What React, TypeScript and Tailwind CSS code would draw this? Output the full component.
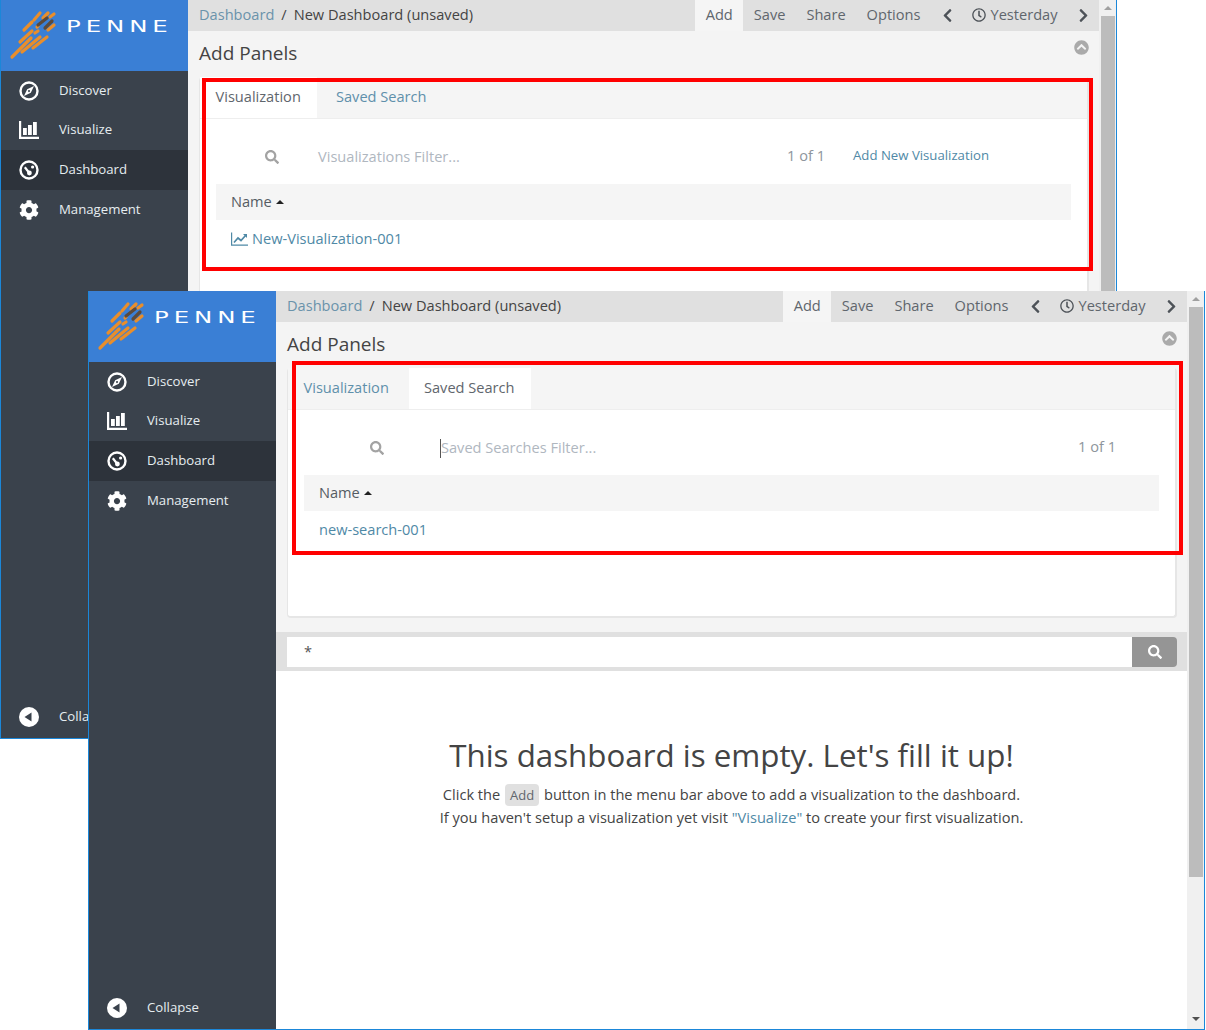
import React from "react";
import { FaCog, FaSearch, FaChevronCircleUp, FaRegClock, FaChevronLeft, FaChevronRight } from "react-icons/fa";

function Logo() {
  const orange: number[][] = [
    [12, 57, 31, 38], [22, 52, 40, 37], [33, 48, 47, 37], [20, 42, 32, 31], [24, 30, 32, 22],
    [35, 33, 38, 31], [48, 30, 54, 25], [34, 20, 40, 13], [43, 18, 48, 13], [50, 17, 54, 14], [37, 27, 38, 26],
  ];
  const dark: number[][] = [[38, 25, 47, 18], [45, 28, 52, 21]];
  return (
    <svg width="50" height="54" viewBox="8 8 50 54" className="shrink-0">
      {orange.map((l, i) => (
        <line key={i} x1={l[0]} y1={l[1]} x2={l[2]} y2={l[3]} stroke="#e98e2b" strokeWidth="3.2" strokeLinecap="round" />
      ))}
      {dark.map((l, i) => (
        <line key={i} x1={l[0]} y1={l[1]} x2={l[2]} y2={l[3]} stroke="#5b4a3c" strokeWidth="3.2" strokeLinecap="round" />
      ))}
    </svg>
  );
}

function CompassIcon() {
  return (
    <svg width="20" height="20" viewBox="0 0 20 20">
      <circle cx="10" cy="10" r="8.5" fill="none" stroke="#fff" strokeWidth="2.4" />
      <path d="M15 5 L11.8 11.8 L5 15 L8.2 8.2 Z M10 9 a1 1 0 1 0 .01 0" fill="#fff" fillRule="evenodd" />
    </svg>
  );
}
function BarsIcon() {
  return (
    <svg width="20" height="20" viewBox="0 0 20 20" fill="#fff">
      <path d="M0 1h2.2v15.8H20V19H0z" />
      <rect x="4" y="8" width="3.8" height="7" />
      <rect x="9" y="5" width="3.8" height="10" />
      <rect x="14" y="2" width="3.8" height="13" />
    </svg>
  );
}
function DialIcon() {
  return (
    <svg width="20" height="20" viewBox="0 0 20 20">
      <circle cx="10" cy="10" r="8.5" fill="none" stroke="#fff" strokeWidth="2.4" />
      <path d="M5.8 7.2 L10 12.5" stroke="#fff" strokeWidth="2.2" />
      <circle cx="10.4" cy="13" r="2.4" fill="#fff" />
      <circle cx="13.6" cy="7" r="1.6" fill="#fff" />
    </svg>
  );
}
function CollapseIcon() {
  return (
    <svg width="20" height="20" viewBox="0 0 20 20">
      <circle cx="10" cy="10" r="10" fill="#fff" />
      <path d="M5.5 10 L12.5 5.5 V14.5 Z" fill="#3a424c" />
    </svg>
  );
}
function LineChartIcon() {
  return (
    <svg width="17" height="14" viewBox="0 0 17 14" fill="none" stroke="currentColor" className="shrink-0">
      <path d="M0.6 0.5 V13.2 H17" strokeWidth="1.2" />
      <path d="M3 10.5 L7 6 L10 8.5 L15 3" strokeWidth="1.7" />
      <path d="M12 2 H16 V6 Z" fill="currentColor" stroke="none" />
    </svg>
  );
}

function NavItem({ icon, label, active }: { icon: React.ReactNode; label: string; active?: boolean }) {
  return (
    <div className={`flex h-[39.6px] items-center ${active ? "bg-[#2d333b]" : ""}`}>
      <span className="mr-[2px] flex w-[56px] justify-center text-white">{icon}</span>
      <span className="text-[13.2px] text-[#e6edf0]">{label}</span>
    </div>
  );
}

function Sidebar() {
  return (
    <aside className="flex w-[187px] shrink-0 flex-col bg-[#3a424c]">
      <div className="flex h-[71px] items-start gap-[8px] bg-[#3a7fd5] pl-[7px] pt-[8px]">
        <Logo />
        <span className="mt-[7px] origin-left scale-x-[1.63] font-['DejaVu_Sans'] text-[15px] font-normal leading-[24px] tracking-[3px] text-white">PENNE</span>
      </div>
      <NavItem icon={<CompassIcon />} label="Discover" />
      <NavItem icon={<BarsIcon />} label="Visualize" />
      <NavItem icon={<DialIcon />} label="Dashboard" active />
      <NavItem icon={<FaCog size={20} />} label="Management" />
      <div className="mt-auto mb-[1px]">
        <NavItem icon={<CollapseIcon />} label="Collapse" />
      </div>
    </aside>
  );
}

function TopBar() {
  const item = "px-[10.5px] pb-[2px] leading-[29px] text-[#5f666d]";
  return (
    <div className="flex h-[31px] shrink-0 items-center bg-[#e0e0e0] text-[14.6px]">
      <div className="flex flex-1 items-center pb-[2px] pl-[11px] leading-[29px]">
        <span className="text-[#6b93ab]">Dashboard</span>
        <span className="mx-[7px] text-[#444]">/</span>
        <span className="text-[#444]">New Dashboard (unsaved)</span>
      </div>
      <span className="bg-[#f5f5f5] px-[10.5px] pb-[2px] leading-[29px] text-[#5f666d]">Add</span>
      <span className={item}>Save</span>
      <span className={item}>Share</span>
      <span className={item}>Options</span>
      <span className="flex w-[41.5px] justify-start pl-[9px] text-[#4d5258]"><FaChevronLeft size={15} /></span>
      <span className="flex items-center gap-[4px] pb-[2px] leading-[29px] text-[#5f666d]"><FaRegClock size={14} className="text-[#4d5258]" />Yesterday</span>
      <span className="flex w-[41.5px] justify-start pl-[18px] text-[#4d5258]"><FaChevronRight size={15} /></span>
    </div>
  );
}

function PanelTabs({ tab }: { tab: "viz" | "search" }) {
  const on = "flex h-full items-center bg-white text-[#5f666d]";
  const off = "flex h-full items-center text-[#5f90ab]";
  return (
    <div className="flex h-[42px] items-stretch gap-[4px] border-b border-[#eeeeee] bg-[#f5f5f5] text-[14.6px]">
      <div className={`w-[117px] pl-[15.5px] pb-[2px] ${tab === "viz" ? on : off}`}>Visualization</div>
      <div className={`w-[122px] pl-[15px] pb-[2px] ${tab === "search" ? on : off}`}>Saved Search</div>
    </div>
  );
}

function Toolbar({ tab }: { tab: "viz" | "search" }) {
  if (tab === "viz") {
    return (
      <div className="flex h-[65px] items-center pt-[11px] text-[14.6px]">
        <FaSearch size={14} className="ml-[49px] text-[#a3a3a3]" />
        <span className="ml-[39px] flex-1 text-[#b0b7bf]">Visualizations Filter...</span>
        <span className="-mt-[2px] text-[#8e959c]">1 of 1</span>
        <span className="-mt-[2px] ml-[28px] mr-[82px] text-[13.2px] text-[#4f89a6]">Add New Visualization</span>
      </div>
    );
  }
  return (
    <div className="flex h-[65px] items-center pt-[11px] text-[14.6px]">
      <FaSearch size={14} className="ml-[66px] text-[#a3a3a3]" />
      <span className="ml-[56px] h-[19px] w-px bg-[#555]" />
      <span className="flex-1 text-[#b0b7bf]">Saved Searches Filter...</span>
      <span className="-mt-[2px] mr-[43px] text-[#8e959c]">1 of 1</span>
    </div>
  );
}

function Panel({ tab }: { tab: "viz" | "search" }) {
  return (
    <div className="ml-[11px] mr-[10px] h-[250px] rounded-[4px] border-2 border-l border-t-0 border-[#e6e6e6] bg-white">
      <PanelTabs tab={tab} />
      <div className="px-[16px]">
        <Toolbar tab={tab} />
        <div className="flex h-[36px] items-center gap-[4px] bg-[#f5f5f5] pl-[15px] text-[14.6px] text-[#555c63]">
          Name
          <span className="h-0 w-0 border-x-[4.5px] border-b-[4.5px] border-x-transparent border-b-[#222]" />
        </div>
        <div className="flex h-[37px] items-center gap-[4px] pl-[15px] text-[14.6px] text-[#4f89a6]">
          {tab === "viz" ? (
            <>
              <LineChartIcon />
              New-Visualization-001
            </>
          ) : (
            "new-search-001"
          )}
        </div>
      </div>
    </div>
  );
}

function Main({ tab }: { tab: "viz" | "search" }) {
  return (
    <main className="flex min-w-0 flex-1 flex-col bg-white">
      <TopBar />
      <div className="h-[310px] shrink-0 bg-[#f4f4f4]">
        <div className="flex h-[46px] items-center justify-between pl-[11px] pr-[10px] text-[19px] text-[#444]">
          <span className="-mt-[2px]">Add Panels</span>
          <FaChevronCircleUp size={15} className="-mt-[14px] text-[#aaaaaa]" />
        </div>
        <Panel tab={tab} />
      </div>
      <div className="flex h-[39px] shrink-0 items-center bg-[#e0e0e0] pl-[11px] pr-[10px]">
        <div className="flex h-[30px] flex-1 items-center bg-white pl-[17px] text-[14.6px] text-[#555]">*</div>
        <div className="flex h-[30px] w-[45px] items-center justify-center rounded-r-[4px] bg-[#959595] text-white">
          <FaSearch size={14} />
        </div>
      </div>
      <div className="flex flex-1 flex-col items-center pt-[63px] text-[#444]">
        <h1 className="text-[31.3px] leading-[42px]">This dashboard is empty. Let's fill it up!</h1>
        <p className="mt-[7px] text-[14.6px] leading-[23px]">
          Click the <span className="mx-[1px] inline-block rounded-[4px] bg-[#e0e0e0] px-[5px] text-[13px] leading-[22px] text-[#5f666d]">Add</span> button in the menu bar above to add a visualization to the dashboard.
        </p>
        <p className="text-[14.6px] leading-[23px]">
          If you haven't setup a visualization yet visit <span className="text-[#4f89a6]">"Visualize"</span> to create your first visualization.
        </p>
      </div>
    </main>
  );
}

function Scrollbar() {
  return (
    <div className="flex w-[17px] shrink-0 flex-col items-center bg-[#f0f0f0]">
      <span className="mt-[6px] h-0 w-0 border-x-[4px] border-b-[4px] border-x-transparent border-b-[#a0a0a0]" />
      <div className="mt-[6px] h-[570px] w-[14px] bg-[#bcbcbc]" />
      <span className="mb-[8px] mt-auto h-0 w-0 border-x-[4px] border-t-[4px] border-x-transparent border-t-[#505050]" />
    </div>
  );
}

function Window({ tab, place, red }: { tab: "viz" | "search"; place: string; red: string }) {
  return (
    <div className={`absolute flex h-[739px] w-[1117px] overflow-hidden border-x border-b border-[#1b87d9] bg-white ${place}`}>
      <Sidebar />
      <Main tab={tab} />
      <Scrollbar />
      <div className={`absolute border-[4px] border-[#ff0000] ${red}`} />
    </div>
  );
}

export default function App() {
  return (
    <div className="relative h-[1030px] w-[1206px] overflow-hidden bg-white font-['Open_Sans',sans-serif]">
      <Window tab="viz" place="left-0 top-0" red="left-[201px] top-[78px] h-[193px] w-[891px]" />
      <Window tab="search" place="left-[88px] top-[291px]" red="left-[203px] top-[70px] h-[194px] w-[891px]" />
    </div>
  );
}
